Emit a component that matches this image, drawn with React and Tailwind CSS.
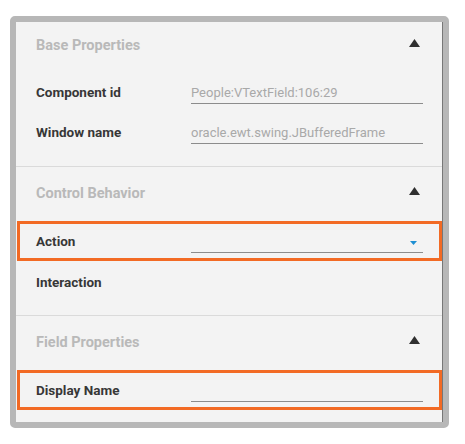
import React from "react";

const font = { fontFamily: "Roboto, 'Liberation Sans', sans-serif" };

function UpTri() {
  return (
    <svg width="11" height="8" viewBox="0 0 11 8" className="block">
      <polygon points="5.5,0 11,8 0,8" fill="#2f2f2f" />
    </svg>
  );
}

function Header({ title, h }) {
  return (
    <div className={`flex items-center justify-between pl-[20px] pr-[22px] ${h}`}>
      <span className="text-[14.5px] font-bold text-[#b9b9b9] leading-[20px]">{title}</span>
      <div className="mb-[6px]">
        <UpTri />
      </div>
    </div>
  );
}

function Field({ value, caret, h = "h-[24px]" }) {
  return (
    <div className={`w-[232px] ${h} border-b border-[#8c8c8c] flex items-center justify-between pt-[2px]`}>
      <span className="text-[13px] text-[#a9a9a9] leading-[16px] whitespace-nowrap">{value}</span>
      {caret && (
        <svg width="7" height="4" viewBox="0 0 7 4" className="block mr-[6px] mt-[2px]">
          <polygon points="0,0 7,0 3.5,4" fill="#1e8fd2" />
        </svg>
      )}
    </div>
  );
}

const labelCls = "w-[155px] text-[13.5px] font-bold text-[#373737] leading-[18px]";

function Row({ label, value, caret, noField }) {
  return (
    <div className="flex items-center h-[40px] pl-[20px]">
      <span className={labelCls}>{label}</span>
      {!noField && <Field value={value} caret={caret} />}
    </div>
  );
}

function Boxed({ children }) {
  return (
    <div className="ml-[1px] border-[3px] border-[#f26a24] h-[40px] flex">
      <div className="flex items-center pl-[16px] w-full h-full">{children}</div>
    </div>
  );
}

export default function App() {
  return (
    <div className="w-[465px] h-[444px] bg-white pl-[10px] pt-[16px]" style={font}>
      <div className="w-[439px] h-[412px] border-[6px] border-[#b7b7b7] rounded-[5px] bg-[#b7b7b7] overflow-hidden">
        <div className="h-full bg-[#f3f3f3] border-r border-[#777777] flex flex-col">
          {/* Base Properties */}
          <div className="pb-[14px]">
            <Header title="Base Properties" h="h-[48px]" />
            <div className="pt-[2px]">
              <Row label="Component id" value="People:VTextField:106:29" />
              <Row label="Window name" value="oracle.ewt.swing.JBufferedFrame" />
            </div>
          </div>
          <div className="h-px bg-[#dadada]" />
          {/* Control Behavior */}
          <div className="pb-[13px]">
            <Header title="Control Behavior" h="h-[54px]" />
            <Boxed>
              <span className={labelCls}>Action</span>
              <Field value="" caret />
            </Boxed>
            <div className="pt-[1px]">
              <Row label="Interaction" noField />
            </div>
          </div>
          <div className="h-px bg-[#dadada]" />
          {/* Field Properties */}
          <div>
            <Header title="Field Properties" h="h-[54px]" />
            <Boxed>
              <span className={labelCls}>Display Name</span>
              <div className="self-end mb-[5px]">
                <div className="w-[232px] border-b border-[#8c8c8c]" />
              </div>
            </Boxed>
          </div>
        </div>
      </div>
    </div>
  );
}
